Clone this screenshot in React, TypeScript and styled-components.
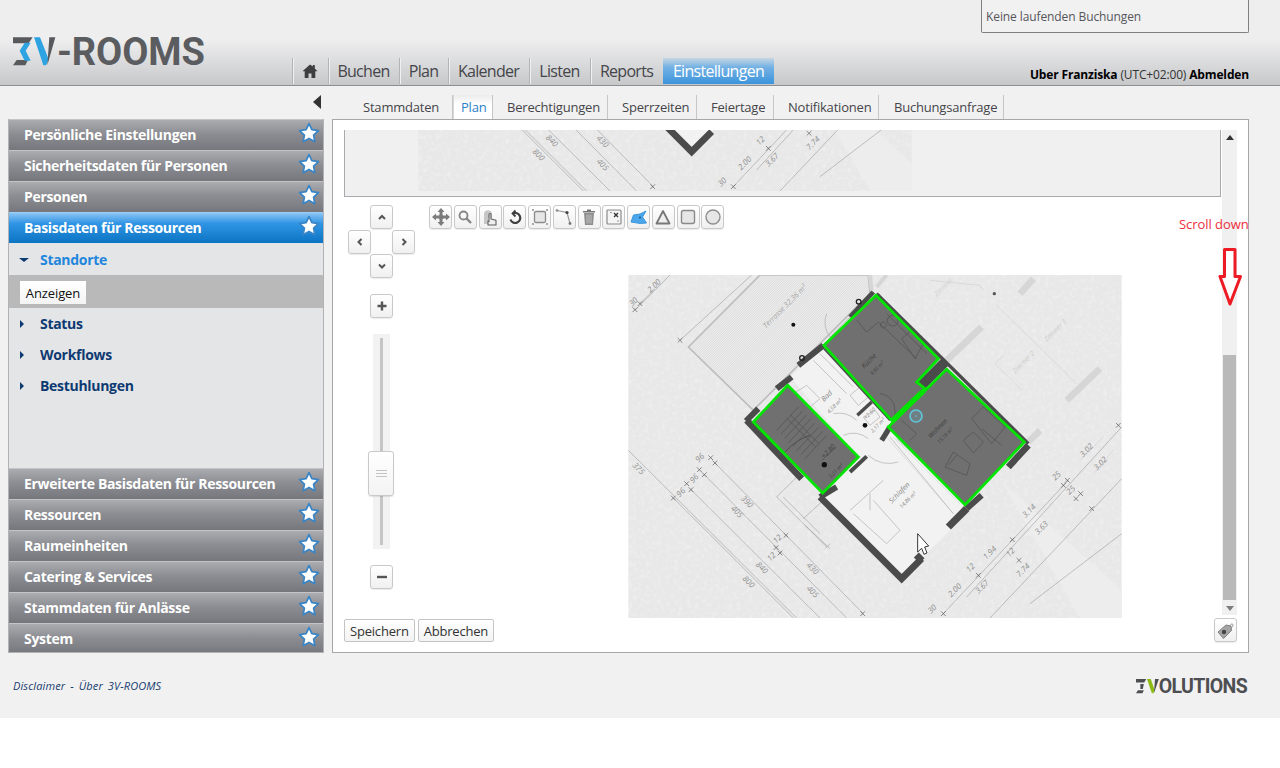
import React from 'react';
import styled, { createGlobalStyle } from 'styled-components';

const Global = createGlobalStyle`
  html, body { margin: 0; padding: 0; background: #fff; }
  body { font-family: "Open Sans", "Noto Sans", "Liberation Sans", sans-serif; }
  * { box-sizing: border-box; }
`;

const Page = styled.div`
  width: 1280px;
  height: 718px;
  background: #f1f1f1;
  overflow: hidden;
`;

/* ---------- header ---------- */
const Header = styled.header`
  height: 86px;
  border-bottom: 1px solid #8d8e90;
  background: linear-gradient(#eeeeef 0, #eeeeef 40px, #c7c8ca 85px);
  display: flex;
  flex-direction: column;
`;
const TopRow = styled.div`
  height: 33px;
  display: flex;
  justify-content: flex-end;
  padding-right: 31px;
`;
const BookingBox = styled.div`
  width: 268px;
  height: 33px;
  border: 1px solid #7f8083;
  border-top: 0;
  border-radius: 0 0 2px 2px;
  background: #f1f1f2;
  padding: 8px 0 0 4px;
  font-size: 12px;
  line-height: 17px;
  letter-spacing: -0.1px;
  color: #55555a;
`;
const MainRow = styled.div`
  flex: 1;
  display: flex;
  align-items: flex-end;
  padding-right: 31px;
`;
const LogoWrap = styled.div`
  width: 279px;
  margin-left: 13px;
  height: 48px;
  display: flex;
  align-items: flex-start;
`;
const LogoText = styled.span`
  font-family: Roboto, "Liberation Sans", sans-serif;
  font-weight: 700;
  font-size: 38px;
  line-height: 30px;
  letter-spacing: -0.1px;
  color: #5b5c60;
`;
const Nav = styled.nav`
  display: flex;
  height: 26px;
  margin-bottom: 1px;
`;
const NavItem = styled.div<{ $w: number; $active?: boolean }>`
  width: ${p => p.$w}px;
  height: 26px;
  margin-right: 1px;
  border-left: ${p => (p.$active ? '0' : '1px solid #b3b4b6')};
  box-shadow: ${p => (p.$active ? 'none' : 'inset 1px 0 0 #f0f0f0')};
  display: flex;
  align-items: center;
  justify-content: center;
  font-size: 16px;
  line-height: 24px;
  letter-spacing: -0.7px;
  color: ${p => (p.$active ? '#fff' : '#45454a')};
  background: ${p => (p.$active ? 'linear-gradient(#c6d6e3 0, #74b2e4 35%, #3c94db 100%)' : 'transparent')};
`;
const UserInfo = styled.div`
  margin-left: auto;
  margin-bottom: 1px;
  font-size: 12px;
  line-height: 18px;
  letter-spacing: -0.15px;
  color: #333;
  b { color: #000; font-weight: 700; }
`;

/* ---------- layout ---------- */
const Body = styled.div`
  display: flex;
  padding: 0 31px 0 8px;
  gap: 8px;
`;
const LeftCol = styled.div`
  width: 316px;
`;
const CollapseRow = styled.div`
  height: 33px;
  display: flex;
  justify-content: flex-end;
  align-items: flex-start;
  padding: 9px 3px 0 0;
`;
const CollapseArrow = styled.div`
  width: 0;
  height: 0;
  border-top: 7.5px solid transparent;
  border-bottom: 7.5px solid transparent;
  border-right: 8px solid #333;
`;
const Sidebar = styled.aside`
  height: 534px;
  overflow: hidden;
  border: 1px solid #b2b2b4;
  border-top: 0;
  display: flex;
  flex-direction: column;
  background: #e4e5e7;
`;
const AccordionHead = styled.div<{ $active?: boolean }>`
  height: 31px;
  flex: none;
  border-top: 1px solid ${p => (p.$active ? '#9ccdf6' : '#c4c4c6')};
  background: ${p => (p.$active ? 'linear-gradient(#8cc4f4 0, #2f94e4 35%, #0b74c3 100%)' : 'linear-gradient(#abacb0 0, #8d8e93 45%, #76777c 100%)')};
  display: flex;
  align-items: center;
  padding: 0 3px 0 15px;
  font-size: 14px;
  font-weight: 700;
  letter-spacing: -0.32px;
  color: #fff;
  span { flex: 1; margin-top: -2px; }
  svg { margin-top: -4px; }
`;
const AccordionBody = styled.div`
  height: 225px;
  flex: none;
  padding-top: 1px;
  display: flex;
  flex-direction: column;
`;
const TreeRow = styled.div<{ $open?: boolean }>`
  height: 31px;
  display: flex;
  align-items: center;
  padding-left: 10px;
  font-size: 14px;
  font-weight: 700;
  letter-spacing: -0.3px;
  color: ${p => (p.$open ? '#1f86dc' : '#0e3a72')};
  span { margin-left: ${p => (p.$open ? 11 : 16)}px; }
`;
const CaretRight = styled.i`
  width: 0;
  height: 0;
  margin-left: 1px;
  border-top: 4px solid transparent;
  border-bottom: 4px solid transparent;
  border-left: 4px solid #0e3a72;
`;
const CaretDown = styled.i`
  width: 0;
  height: 0;
  border-left: 5px solid transparent;
  border-right: 5px solid transparent;
  border-top: 4px solid #0e3a72;
`;
const ActionBand = styled.div`
  height: 33px;
  background: #b9b9b9;
  padding: 6px 0 0 11px;
`;
const ActionButton = styled.div`
  width: 66px;
  height: 23px;
  background: linear-gradient(#fff, #f4f4f4);
  font-size: 13px;
  line-height: 24px;
  text-align: center;
  letter-spacing: -0.1px;
  color: #111;
`;

const RightCol = styled.div`
  width: 917px;
`;
const Tabs = styled.div`
  height: 33px;
  padding: 9px 0 0 22px;
  display: flex;
`;
const Tab = styled.div<{ $w: number; $pl: number; $active?: boolean }>`
  width: ${p => p.$w}px;
  height: 24px;
  padding-left: ${p => p.$pl}px;
  font-size: 13px;
  line-height: 25px;
  letter-spacing: -0.2px;
  white-space: nowrap;
  color: ${p => (p.$active ? '#2b7fc9' : '#45454a')};
  border-right: 1px solid #c6c6c8;
  background: ${p => (p.$active ? 'linear-gradient(#ececec, #fff 40%)' : 'transparent')};
  border-left: ${p => (p.$active ? '1px solid #d8d8d8' : '0')};
`;
const Panel = styled.main`
  position: relative;
  height: 534px;
  background: #fff;
  border: 1px solid #a7a7ab;
  padding: 10px 11px 0 11px;
`;
const ScrollRow = styled.div`
  height: 488px;
  display: flex;
  gap: 1px;
`;
const ScrollContent = styled.div`
  width: 877px;
  overflow: hidden;
`;
const Scrollbar = styled.div`
  width: 15px;
  height: 485px;
  background: #f0f0f0;
  display: flex;
  flex-direction: column;
  align-items: center;
`;
const ArrowUp = styled.i`
  margin-top: 5px;
  width: 0;
  height: 0;
  border-left: 4px solid transparent;
  border-right: 4px solid transparent;
  border-bottom: 5px solid #333;
`;
const ArrowDown = styled.i`
  margin-top: 6px;
  width: 0;
  height: 0;
  border-left: 4px solid transparent;
  border-right: 4px solid transparent;
  border-top: 5px solid #7d7d7d;
`;
const Thumb = styled.div`
  margin-top: 215px;
  width: 13px;
  height: 245px;
  background: #b9b9b9;
`;
const Strip = styled.div`
  height: 67px;
  background: #f0f0f0;
  border: 1px solid #a9a9ad;
  border-top: 0;
  padding-left: 73px;
`;
const Editor = styled.div`
  display: flex;
  padding: 8px 0 0 4px;
`;
const Controls = styled.div`
  width: 66px;
  display: flex;
  flex-direction: column;
`;
const PanPad = styled.div`
  display: grid;
  grid-template-columns: repeat(3, 22px);
  grid-template-rows: repeat(3, 24.5px);
`;
const MapBtn = styled.div<{ $col?: number; $row?: number }>`
  grid-column: ${p => p.$col ?? 'auto'};
  grid-row: ${p => p.$row ?? 'auto'};
  width: 23px;
  height: 24px;
  flex: none;
  border: 1px solid #c9c9c9;
  border-radius: 3px;
  background: linear-gradient(#fff, #f0f0f0);
  box-shadow: 0 1px 1px rgba(0, 0, 0, 0.08);
  display: flex;
  align-items: center;
  justify-content: center;
`;
const ZoomColumn = styled.div`
  margin: 15px 0 0 22px;
  display: flex;
  flex-direction: column;
`;
const SliderTrack = styled.div`
  position: relative;
  width: 17px;
  height: 215px;
  margin: 16px 0 16px 3px;
  background: #f2f2f2;
  display: flex;
  justify-content: center;
  padding: 4px 0;
  &::before { content: ''; width: 3px; background: #c5c5c5; }
`;
const SliderHandle = styled.div`
  position: absolute;
  left: -5px;
  top: 117px;
  width: 26px;
  height: 45px;
  border: 1px solid #c9c9c9;
  border-radius: 3px;
  background: linear-gradient(#fff, #f3f3f3);
  box-shadow: 0 1px 1px rgba(0, 0, 0, 0.1);
  display: flex;
  flex-direction: column;
  align-items: center;
  justify-content: center;
  gap: 2px;
  i { width: 11px; height: 1px; background: #c4c4c4; }
`;
const Canvas = styled.div`
  margin-left: 15px;
  display: flex;
  flex-direction: column;
`;
const Toolbar = styled.div`
  display: flex;
  gap: 1.75px;
  height: 24px;
`;
const PlanSlot = styled.div`
  margin: 46px 0 0 199px;
  width: 494px;
  height: 343px;
`;
const FootRow = styled.div`
  display: flex;
  gap: 3px;
  align-items: flex-start;
`;
const FootButton = styled.div`
  height: 23px;
  margin-top: 1px;
  padding: 0 5px;
  border: 1px solid #c4c4c4;
  border-radius: 2px;
  background: linear-gradient(#fff, #f3f3f3);
  font-size: 13px;
  line-height: 22px;
  letter-spacing: -0.2px;
  color: #333;
`;
const TagButton = styled(MapBtn)`
  margin-left: auto;
`;
const ScrollNote = styled.div`
  position: absolute;
  left: 846px;
  top: 95px;
  font-size: 13px;
  line-height: 18px;
  letter-spacing: -0.05px;
  color: #ee2d3c;
  white-space: nowrap;
`;
const ScrollArrow = styled.svg`
  position: absolute;
  left: 885px;
  top: 128px;
`;

/* ---------- footer ---------- */
const Footer = styled.footer`
  display: flex;
  justify-content: space-between;
  padding: 26px 33px 0 13px;
`;
const FooterLinks = styled.div`
  font-size: 11px;
  font-style: italic;
  line-height: 14px;
  letter-spacing: 0.12px;
  word-spacing: 2px;
  color: #163c70;
`;
const VendorLogo = styled.div`
  display: flex;
  align-items: center;
  margin-top: -1px;
  height: 17px;
  font-family: Roboto, "Liberation Sans", sans-serif;
  font-weight: 700;
  font-size: 19.5px;
  letter-spacing: -0.65px;
  color: #4d4e52;
`;

/* ---------- drawings ---------- */
const Star = () => (
  <svg width="22" height="22" viewBox="0 0 20 20">
    <path d="M10 1.500l2.600 5.500 6 .8-4.400 4.100 1.100 6L10 15l-5.300 2.900 1.100-6L1.400 7.800l6-.8z" fill="#fff" stroke="#3a85c6" strokeWidth="1.600" strokeLinejoin="round" />
  </svg>
);

const Chevron = ({ d }: { d: string }) => (
  <svg width="10" height="10" viewBox="0 0 10 10"><path d={d} fill="none" stroke="#555" strokeWidth="2" /></svg>
);

const Home = () => (
  <svg width="16" height="14" viewBox="0 0 16 14">
    <path d="M8 0.500L0.500 7.300h2.200V14h3.800V9.500h3V14h3.800V7.300h2.200L12.800 4.400V1h-2v1.600z" fill="#3e3e40" />
  </svg>
);

const icons: React.ReactNode[] = [
  <g key="move" fill="#7c7c7c"><path d="M9 0l3.500 4H10.500v3h-3V4H5.500zM9 18l-3.500-4h2v-3h3v3h2zM0 9l4-3.500v2h3v3H4v2zM18 9l-4 3.500v-2h-3v-3h3v-2z" /><circle cx="9" cy="9" r="2.500" /></g>,
  <g key="zoom" fill="none" stroke="#858585"><circle cx="7.500" cy="7.500" r="4" strokeWidth="1.800" /><path d="M10.500 10.500l4.500 4.500" strokeWidth="2.400" /></g>,
  <g key="hand"><path d="M3 16V6c0-5 8-5 8 0v4H7v6z" fill="#c6c6c6" /><path d="M7 17v-4l1 .5V6.500c0-1.400 2-1.400 2 0V11l5 1.200V17z" fill="#eee" stroke="#5f5f5f" strokeWidth="1.100" strokeLinejoin="round" /></g>,
  <g key="undo" fill="none" stroke="#3f3f3f" strokeWidth="2.200"><path d="M7 5.500a5 5 0 1 1-2.500 6" /><path d="M9.500 2.500L6.500 5.500l3 3" strokeWidth="1.800" /></g>,
  <g key="frame"><rect x="3.500" y="3.500" width="11" height="11" rx="1.500" fill="#e6e6e6" stroke="#8a8a8a" strokeWidth="1.300" /><path d="M1 1h2v2H1zM15 1h2v2h-2zM1 15h2v2H1zM15 15h2v2h-2z" fill="#aaa" /></g>,
  <g key="line"><path d="M2 2.500l10 2 3 11" fill="none" stroke="#9a9a9a" strokeWidth="1.200" /><circle cx="2" cy="2.500" r="1.400" fill="#999" /><circle cx="12" cy="4.500" r="1.600" fill="#444" /><circle cx="15" cy="15.500" r="1.400" fill="#777" /></g>,
  <g key="trash"><path d="M4 5h10l-1 12H5z" fill="#8e8e8e" /><path d="M3 3h12v1.500H3zM7 1.500h4V3H7z" fill="#777" /><path d="M7 6.500v9M9 6.500v9M11 6.500v9" stroke="#cfcfcf" strokeWidth=".8" /></g>,
  <g key="cross"><rect x="2" y="2" width="14" height="14" rx="1" fill="#f5f5f5" stroke="#8a8a8a" strokeWidth="1.200" /><path d="M9 5l4 4M13 5l-4 4" stroke="#333" strokeWidth="1.300" /><path d="M5 4.500h2M13 12v2" stroke="#999" /></g>,
  <g key="poly"><path d="M1 14L3.500 7 10 6 16 3l-3.500 6 4 6-6 .5z" fill="#4aa5ea" stroke="#3b97de" strokeWidth="1" /><circle cx="10" cy="9.500" r="1" fill="#14568a" /></g>,
  <path key="tri" d="M9 3l6.500 12.500h-13z" fill="#eee" stroke="#777" strokeWidth="1.800" strokeLinejoin="round" />,
  <rect key="sq" x="2.500" y="2.500" width="13" height="13" rx="2" fill="#e6e6e6" stroke="#8a8a8a" strokeWidth="1.400" />,
  <circle key="ci" cx="9" cy="9" r="7" fill="#e6e6e6" stroke="#8e8e8e" strokeWidth="1.400" />,
];

const ToolIcon = ({ children }: { children: React.ReactNode }) => (
  <svg width="18" height="18" viewBox="0 0 18 18">{children}</svg>
);

type Pts = [number, number, number, number];
const thin: Pts[] = [
  [25, 540, 530, 1043], [160, 683, 520, 1043], [213, 658, 600, 1043], [253, 613, 680, 1043],
  [285, 578, 730, 1030], [180, 210, 395, 14], [45, 120, 150, 14], [60, 100, 100, 60],
  [970, 1030, 1345, 630], [1110, 1043, 1505, 625], [1040, 980, 1505, 470], [1230, 1000, 1505, 790],
  [470, 680, 620, 830], [490, 680, 600, 790], [470, 680, 530, 620], [550, 745, 610, 690],
  [555, 765, 630, 835], [615, 835, 630, 820],
];
const faint: Pts[] = [
  [1130, 105, 1370, 340], [1125, 280, 1205, 360], [1450, 500, 1380, 570], [1480, 540, 1420, 610],
  [930, 30, 1080, 45], [1080, 45, 1090, 60], [800, 500, 1000, 730], [820, 500, 1020, 700],
  [1125, 280, 1150, 255],
];
const ticks: [number, number][] = [
  [160, 683], [213, 658], [200, 640], [238, 598], [253, 613], [272, 562], [285, 578], [180, 210], [60, 100], [45, 118],
  [468, 832], [480, 848], [498, 795], [728, 1030], [970, 1030], [1075, 915], [1177, 808], [1197, 870], [1330, 645],
  [1342, 630], [1368, 685], [1382, 670], [1415, 715], [1495, 465],
];
const labels: [string, number, number, number][] = [
  ['375', 50, 600, 45], ['800', 380, 940, 45], ['840', 420, 898, 45], ['405', 345, 730, 45], ['390', 375, 700, 45],
  ['430', 572, 900, 45], ['405', 572, 970, 45], ['96', 188, 672, -45], ['96', 228, 630, -45], ['96', 245, 568, -45],
  ['12', 460, 865, -45], ['12', 478, 812, -45],
  ['2.00', 1010, 965, -45], ['3.67', 1092, 955, -45], ['7.74', 1215, 905, -45], ['1.94', 1115, 853, -45], ['3.14', 1233, 727, -45],
  ['3.63', 1270, 778, -45], ['12', 1057, 898, -45], ['12', 1177, 852, -45], ['25', 1315, 622, -45], ['25', 1358, 665, -45],
  ['3.02', 1405, 545, -45], ['3.02', 1447, 585, -45], ['30', 942, 1022, -45], ['2.00', 108, 52, -45], ['30', 46, 100, -45],
];
const stairRungs = [0, 1, 2, 3, 4, 5, 6, 7];

const FloorPlan = ({ strip }: { strip?: boolean }) => (
  <svg width="494" height={strip ? 61 : 343} viewBox={strip ? '25 860 1480 183' : '25 14 1480 1029'} style={{ display: 'block' }}>
    <defs>
      <pattern id="hatch" width="5" height="5" patternUnits="userSpaceOnUse" patternTransform="rotate(-45)">
        <rect width="5" height="5" fill="#efefef" />
        <rect width="5" height="1.600" fill="#d2d2d2" />
      </pattern>
      <filter id="paper" x="0" y="0" width="100%" height="100%">
        <feTurbulence type="fractalNoise" baseFrequency="0.08" numOctaves="3" seed="4" />
        <feColorMatrix values="0 0 0 0 1  0 0 0 0 1  0 0 0 0 1  1.600 0 0 0 -0.750" />
      </filter>
    </defs>
    <rect x="25" y="14" width="1480" height="1029" fill="#e8e8e8" />
    <rect x="25" y="14" width="1480" height="1029" filter="url(#paper)" opacity="0.450" />
    <path d="M1505 1043H1380L1150 640 1505 960z" fill="#ededed" />
    <path d="M205 230L420 14H745L750 70 400 420z" fill="url(#hatch)" stroke="#bdbdbd" strokeWidth="5" />
    <path d="M620 130a70 70 0 0 0 10 70l60-60" fill="none" stroke="#aaa" strokeWidth="2" />
    <path d="M510 320L610 225 1030 700 1000 770 850 920 610 680 715 560z" fill="#f2f2f2" />
    <g stroke="#d6d6d6" fill="none">
      <path d="M1085 170L975 275M1440 295L1340 390M1240 25L1200 70M1260 480L1225 515" strokeWidth="20" />
      <path d="M750 14L755 60M800 14L770 50" strokeWidth="12" />
    </g>
    <g stroke="#d2d2d2" strokeWidth="2">{faint.map((l, i) => <line key={i} x1={l[0]} y1={l[1]} x2={l[2]} y2={l[3]} />)}</g>
    <g stroke="#9c9c9c" strokeWidth="1.800">{thin.map((l, i) => <line key={i} x1={l[0]} y1={l[1]} x2={l[2]} y2={l[3]} />)}</g>
    <g stroke="#555" strokeWidth="2">{ticks.map(([x, y], i) => <path key={i} d={`M${x - 7} ${y - 7}l14 14M${x - 7} ${y + 7}l14 -14`} />)}</g>
    <g fontSize="24" fill="#8f8f8f" fontFamily="Open Sans, sans-serif" fontStyle="italic">
      {labels.filter(l => !strip || l[2] > 880).map(([t, x, y, r], i) => <text key={i} transform={`translate(${x} ${y}) rotate(${r})`} textAnchor="middle">{t}</text>)}
    </g>
    <g fill="none" stroke="#bbb" strokeWidth="2.500">
      <path d="M580 270L680 370M600 250L700 350M520 370L560 345 600 385 570 410zM690 375L720 350 745 380 715 405z" />
      <path d="M640 430a80 80 0 0 1 70 20M670 495a70 70 0 0 1 75 10M745 555a90 90 0 0 0 90 20" />
      <path d="M690 720L790 630M700 730L800 820 840 780 760 690M750 670L750 720" />
      <path d="M810 500L1000 730M830 505L1030 690" />
      <path d="M730 440L765 420 780 440 750 465z" />
    </g>
    <g fill="none" stroke="#4b4b4b" strokeLinecap="butt">
      <path d="M600 680L845 925 905 865" strokeWidth="20" />
    </g>
    {!strip && (
      <>
        <g fill="#a8a8a8" fontFamily="Open Sans, sans-serif" fontStyle="italic">
          <text transform="translate(438 175) rotate(-45)" fontSize="22">Terrasse 32,36 m²</text>
          <text transform="translate(1185 310) rotate(-45)" fontSize="20" fill="#c9c9c9">Zimmer 2</text>
          <text transform="translate(1280 215) rotate(-45)" fontSize="20" fill="#c9c9c9">Zimmer 3</text>
          <text transform="translate(950 80) rotate(-45)" fontSize="20" fill="#d0d0d0">Zimmer</text>
        </g>
        <g fontFamily="Open Sans, sans-serif" fontStyle="italic" fill="#888">
          <text transform="translate(612 395) rotate(-45)" fontSize="21">Bad</text>
          <text transform="translate(628 430) rotate(-45)" fontSize="16">4,58 m²</text>
          <text transform="translate(815 700) rotate(-45)" fontSize="21">Schlafen</text>
          <text transform="translate(845 715) rotate(-45)" fontSize="16">14,86 m²</text>
          <text transform="translate(758 488) rotate(-45)" fontSize="16">2,17 m²</text>
          <text transform="translate(738 448) rotate(-45)" fontSize="17">+2.60</text>
        </g>
        <g fill="#707070">
          <path d="M768 75L955 265 890 335 915 355 815 450 612 225z" />
          <path d="M980 297L1213 515 1035 703 805 470z" />
          <path d="M503 345L715 560 608 668 400 455z" />
        </g>
        <g fill="none" stroke="#4b4b4b" strokeLinecap="butt">
          <path d="M380 450L545 625" strokeWidth="20" />
          <path d="M378 452L415 415" strokeWidth="18" />
          <path d="M470 355L515 320" strokeWidth="18" />
          <path d="M535 285L610 225" strokeWidth="18" />
          <path d="M690 140L760 65" strokeWidth="14" />
          <path d="M770 70L1225 520" strokeWidth="10" />
          <path d="M905 345L975 275" strokeWidth="30" />
          <path d="M612 235L810 450" strokeWidth="6" />
          <path d="M1165 590L1225 525" strokeWidth="20" />
          <path d="M1040 715L1085 675" strokeWidth="18" />
          <path d="M985 770L1040 715" strokeWidth="22" />
          <path d="M690 605L740 558" strokeWidth="12" />
          <path d="M600 680L650 650" strokeWidth="18" />
          <path d="M712 435L755 395" strokeWidth="10" />
          <path d="M785 510L810 470" strokeWidth="16" />
          <path d="M890 870L905 855" strokeWidth="24" />
        </g>
        <g fill="none" stroke="#4e4e4e" strokeWidth="2">
          <path d="M710 150L740 185 775 155M775 155L890 265M800 130L920 250M818 135a16 16 0 1 0 .1 0M790 155a9 9 0 1 0 .1 0" />
          <path d="M845 205L880 175 910 220 885 265z" />
          <path d="M780 370a50 50 0 0 1 45 50v25" />
          <path d="M845 450L890 490 870 510" />
          <path d="M1055 445L1090 410 1155 470 1115 520zM1085 475L1145 525M1030 510L1060 485 1090 515 1060 548z" />
          <path d="M975 590L1000 545 1050 580 1040 615zM985 585L1010 555" />
          {stairRungs.map(t => (
            <line key={t} x1={470 + (85 * t) / 7} y1={480 + (85 * t) / 7} x2={535 + (85 * t) / 7} y2={410 + (85 * t) / 7} />
          ))}
          <path d="M502 445L587 530M512 435L597 520" />
          <path d="M490 550C520 520 530 510 570 495" strokeWidth="3" />
          <path d="M605 570L650 530" />
        </g>
        <g fontSize="20" fill="#3f3f3f" fontFamily="Open Sans, sans-serif" fontStyle="italic">
          <text transform="translate(733 295) rotate(-45)">Küche</text>
          <text transform="translate(757 315) rotate(-45)" fontSize="15">9,93 m²</text>
          <text transform="translate(932 505) rotate(-45)">Wohnen</text>
          <text transform="translate(958 520) rotate(-45)" fontSize="15">15,19 m²</text>
          <text transform="translate(612 565) rotate(-45)">+2.80</text>
          <text transform="translate(632 625) rotate(-45)" fontSize="16">3,21 m²</text>
        </g>
        <g fill="#111">
          <circle cx="520" cy="163" r="6" /><circle cx="735" cy="465" r="7" /><circle cx="613" cy="583" r="8" />
          <circle cx="1123" cy="70" r="5" fill="#555" />
        </g>
        <circle cx="716" cy="94" r="7" fill="none" stroke="#222" strokeWidth="4" />
        <circle cx="546" cy="263" r="7" fill="none" stroke="#222" strokeWidth="4" />
        <g fill="none" stroke="#00e400" strokeWidth="8.500" strokeLinejoin="miter">
          <path d="M768 75L955 265 890 335 915 355 815 450 612 225z" />
          <path d="M980 297L1213 515 1035 703 805 470z" />
          <path d="M503 345L715 560 608 668 400 455z" />
          <path d="M818 450L912 360" strokeWidth="16" />
        </g>
        <circle cx="888" cy="437" r="18" fill="rgba(110,190,210,0.2)" stroke="#5fc5d8" strokeWidth="5" />
        <circle cx="888" cy="437" r="2.500" fill="#5fc5d8" />
        <path d="M893 790V845L905 834 912 852 921 848 914 830 926 827z" fill="#fff" stroke="#111" strokeWidth="2.500" strokeLinejoin="round" />
      </>
    )}
  </svg>
);

const mainNav: [string, number][] = [['Buchen', 70], ['Plan', 48], ['Kalender', 80], ['Listen', 60], ['Reports', 72]];
const tabs: [string, number, number][] = [
  ['Stammdaten', 99, 9], ['Plan', 40, 7], ['Berechtigungen', 115, 14], ['Sperrzeiten', 89, 14],
  ['Feiertage', 77, 14], ['Notifikationen', 105, 14], ['Buchungsanfrage', 125, 15],
];
const topSections = ['Persönliche Einstellungen', 'Sicherheitsdaten für Personen', 'Personen'];
const bottomSections = ['Erweiterte Basisdaten für Ressourcen', 'Ressourcen', 'Raumeinheiten', 'Catering & Services', 'Stammdaten für Anlässe', 'System'];

export default function App() {
  return (
    <Page>
      <Global />
      <Header>
        <TopRow><BookingBox>Keine laufenden Buchungen</BookingBox></TopRow>
        <MainRow>
          <LogoWrap>
            <svg width="44" height="30" viewBox="15 22 132 88">
              <path d="M15 22H74L62 40H15zM26 90H60L52 106H15z" fill="#58595c" />
              <path d="M50 38H68L53 62 68 92H50L35 62z" fill="#2da3e2" />
              <path d="M78 22H96L122 88 114 106H106z" fill="#2da3e2" />
              <path d="M124 22H142L118 106z" fill="#58595c" />
            </svg>
            <LogoText>-ROOMS</LogoText>
          </LogoWrap>
          <Nav>
            <NavItem $w={35}><Home /></NavItem>
            {mainNav.map(([t, w]) => <NavItem key={t} $w={w}>{t}</NavItem>)}
            <NavItem $w={111} $active>Einstellungen</NavItem>
          </Nav>
          <UserInfo><b>Uber Franziska</b> (UTC+02:00) <b>Abmelden</b></UserInfo>
        </MainRow>
      </Header>
      <Body>
        <LeftCol>
          <CollapseRow><CollapseArrow /></CollapseRow>
          <Sidebar>
            {topSections.map(s => <AccordionHead key={s}><span>{s}</span><Star /></AccordionHead>)}
            <AccordionHead $active><span>Basisdaten für Ressourcen</span><Star /></AccordionHead>
            <AccordionBody>
              <TreeRow $open><CaretDown /><span>Standorte</span></TreeRow>
              <ActionBand><ActionButton>Anzeigen</ActionButton></ActionBand>
              {['Status', 'Workflows', 'Bestuhlungen'].map(t => <TreeRow key={t}><CaretRight /><span>{t}</span></TreeRow>)}
            </AccordionBody>
            {bottomSections.map(s => <AccordionHead key={s}><span>{s}</span><Star /></AccordionHead>)}
          </Sidebar>
        </LeftCol>
        <RightCol>
          <Tabs>
            {tabs.map(([t, w, pl]) => <Tab key={t} $w={w} $pl={pl} $active={t === 'Plan'}>{t}</Tab>)}
          </Tabs>
          <Panel>
            <ScrollRow>
              <ScrollContent>
                <Strip><FloorPlan strip /></Strip>
                <Editor>
                  <Controls>
                    <PanPad>
                      <MapBtn $col={2} $row={1}><Chevron d="M2 7l3-3 3 3" /></MapBtn>
                      <MapBtn $col={1} $row={2}><Chevron d="M6.500 2L3.500 5l3 3" /></MapBtn>
                      <MapBtn $col={3} $row={2}><Chevron d="M3.500 2l3 3-3 3" /></MapBtn>
                      <MapBtn $col={2} $row={3}><Chevron d="M2 3.500l3 3 3-3" /></MapBtn>
                    </PanPad>
                    <ZoomColumn>
                      <MapBtn><svg width="12" height="12" viewBox="0 0 12 12"><path d="M6 1.500v9M1.500 6h9" stroke="#555" strokeWidth="2.400" /></svg></MapBtn>
                      <SliderTrack>
                        <SliderHandle><i /><i /><i /></SliderHandle>
                      </SliderTrack>
                      <MapBtn><svg width="12" height="12" viewBox="0 0 12 12"><path d="M1 6h10" stroke="#555" strokeWidth="2.400" /></svg></MapBtn>
                    </ZoomColumn>
                  </Controls>
                  <Canvas>
                    <Toolbar>
                      {icons.map((ic, i) => <MapBtn key={i}><ToolIcon>{ic}</ToolIcon></MapBtn>)}
                    </Toolbar>
                    <PlanSlot><FloorPlan /></PlanSlot>
                  </Canvas>
                </Editor>
              </ScrollContent>
              <Scrollbar>
                <ArrowUp />
                <Thumb />
                <ArrowDown />
              </Scrollbar>
            </ScrollRow>
            <FootRow>
              <FootButton>Speichern</FootButton>
              <FootButton>Abbrechen</FootButton>
              <TagButton>
                <svg width="19" height="19" viewBox="0 0 19 19">
                  <path d="M2 11l8-7 5 1 .5 4.500-8 8z" fill="#a5a5a5" stroke="#808080" />
                  <circle cx="8" cy="11" r="2.200" fill="#444" />
                  <path d="M13 6c1-3 4-4 4-2s-2 3-3 3" fill="none" stroke="#999" />
                </svg>
              </TagButton>
            </FootRow>
            <ScrollNote>Scroll down</ScrollNote>
            <ScrollArrow width="25" height="60" viewBox="0 0 25 60">
              <path d="M6.500 1.500H17V28.500H22.500L12 56 2 28.500H6.500z" fill="#fff" stroke="#ed1c24" strokeWidth="3" strokeLinejoin="round" />
            </ScrollArrow>
          </Panel>
        </RightCol>
      </Body>
      <Footer>
        <FooterLinks>Disclaimer - Über 3V-ROOMS</FooterLinks>
        <VendorLogo>
          <svg width="23" height="15" viewBox="15 22 132 88" preserveAspectRatio="none">
            <path d="M15 22H74L62 42H15zM26 88H60L52 106H15zM40 52H60L54 80H40z" fill="#4d4e52" />
            <path d="M78 22H100L122 88 114 106H106z" fill="#8dbb14" />
            <path d="M124 22H146L118 106z" fill="#4d4e52" />
          </svg>
          OLUTIONS
        </VendorLogo>
      </Footer>
    </Page>
  );
}
